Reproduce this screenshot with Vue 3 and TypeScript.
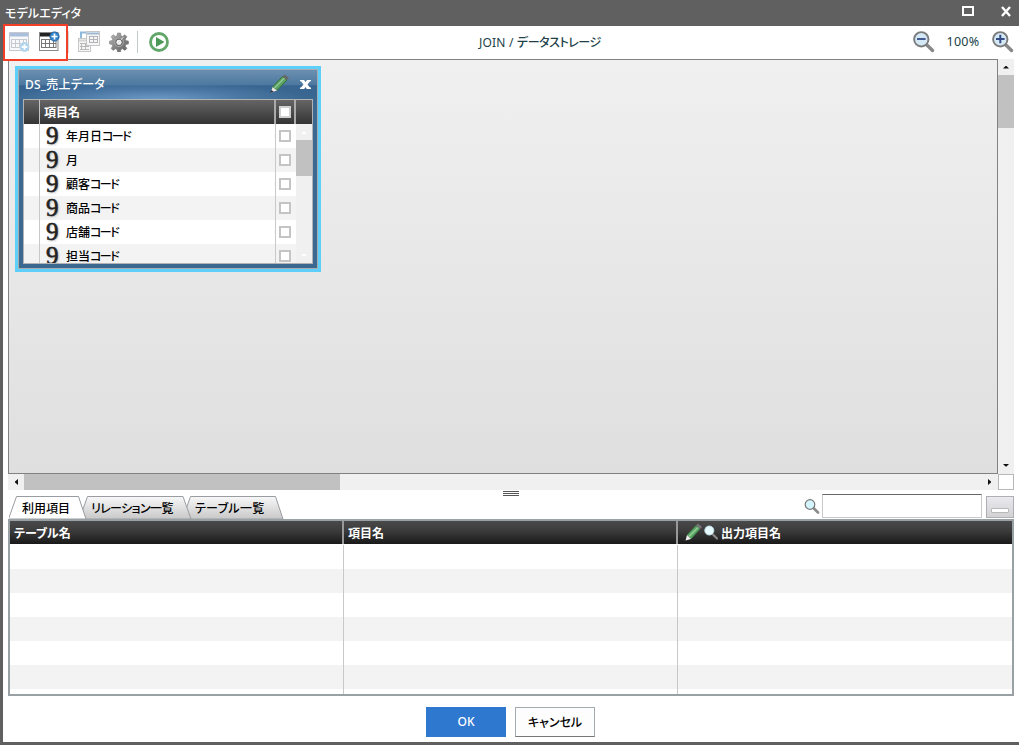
<script setup lang="ts">
import { ref } from 'vue'

interface Field {
  kanji: string
  kana: string
  checked: boolean
}

const fields = ref<Field[]>([
  { kanji: '年月日', kana: 'コード', checked: false },
  { kanji: '月', kana: '', checked: false },
  { kanji: '顧客', kana: 'コード', checked: false },
  { kanji: '商品', kana: 'コード', checked: false },
  { kanji: '店舗', kana: 'コード', checked: false },
  { kanji: '担当', kana: 'コード', checked: false },
])

const tabs = [
  { id: 'items', label: '利用項目', points: '-0.5,24 7.5,1.500 69.500,1.500 77,24' },
  { id: 'relations', label: 'リレーション一覧', points: '-0.5,24 7.5,1.500 103,1.500 111,24' },
  { id: 'tables', label: 'テーブル一覧', points: '-0.5,24 7.5,1.500 92.5,1.500 100,24' },
]
const activeTab = ref('items')
const keyword = ref('')
const emptyRows = 7
</script>

<template>
  <div class="window">
    <header class="titlebar">
      <span class="title">モデルエディタ</span>
      <svg class="win-icons" width="52" height="26" viewBox="0 0 52 26">
        <rect x="3" y="7" width="10" height="8" fill="none" stroke="#fff" stroke-width="2" />
        <path d="M42 7l8 9M50 7l-8 9" stroke="#fff" stroke-width="2.4" fill="none" />
      </svg>
    </header>

    <div class="toolbar">
      <div class="tools">
        <svg class="tool t1" width="22" height="22" viewBox="0 0 22 22">
          <rect x="1.500" y="1.500" width="19" height="18" fill="#f7f8f9" stroke="#c6c9cf" />
          <rect x="2" y="2" width="18" height="3.500" fill="#a9bfdb" />
          <path d="M3 8.500h15M3 12.500h15M3 16.500h15M3.500 8v9M7.500 8v9M11.500 8v9M15.500 8v9M18.500 8v9" stroke="#c6cad0" fill="none" />
          <circle cx="16.500" cy="16" r="4.500" fill="#acd2ed" stroke="#c1daeb" />
          <path d="M13.700 16h5.600M16.500 13.200v5.600" stroke="#fff" stroke-width="1.800" />
        </svg>
        <svg class="tool t2" width="22" height="22" viewBox="0 0 22 22">
          <rect x="1.500" y="1.500" width="18.500" height="18" fill="#fff" stroke="#888" />
          <rect x="2" y="2" width="17" height="3.500" fill="#222" />
          <path d="M3 8.500h15M3 12.500h15M3 16.500h15M3.500 8v9M7.500 8v9M11.500 8v9M15.500 8v9M18 8v9" stroke="#777" fill="none" />
          <circle cx="16.500" cy="5.500" r="4.600" fill="#3485c9" stroke="#2267a4" />
          <path d="M13.500 5.500h6M16.500 2.500v6" stroke="#fff" stroke-width="1.700" />
        </svg>
        <i class="divider first"></i>
        <svg class="tool t3" width="22" height="22" viewBox="0 0 22 22">
          <path d="M3 8V1.500h7" stroke="#8eb8dc" stroke-width="2" fill="none" />
          <rect x=".5" y="7.500" width="12" height="13" fill="#f5f5f5" stroke="#c8c8c8" />
          <path d="M1 9.500h11" stroke="#d5d5d5" stroke-width="2" />
          <path d="M2 12.500h9M2 15.500h9M2 18.500h9M3.500 12v7M7.500 12v7" stroke="#b8b8b8" />
          <rect x="8.500" y=".5" width="13" height="14" fill="#f6f6f6" stroke="#c6c6c6" />
          <path d="M9 2.500h12" stroke="#9fb8d4" stroke-width="2" />
          <path d="M11 5.500h9M11 8.500h9M11 11.500h9M11.500 5v7M15.500 5v7M19.500 5v7" stroke="#b2b4b8" />
        </svg>
        <svg class="tool t4" width="20" height="20" viewBox="0 0 20 20">
          <defs>
            <linearGradient id="gearFill" x1="0" y1="0" x2="1" y2="1">
              <stop offset="0" stop-color="#bbb" />
              <stop offset=".5" stop-color="#858585" />
              <stop offset="1" stop-color="#606060" />
            </linearGradient>
          </defs>
          <path d="M8.500 1h3l.5 2.800 1.500.6 2.400-1.700 2 2-1.600 2.500.6 1.400 2.600.5v2.800l-2.600.6-.6 1.400 1.600 2.500-2 2-2.500-1.600-1.400.6-.5 2.600h-3l-.5-2.600-1.400-.6-2.500 1.600-2-2 1.600-2.500-.6-1.400-2.600-.6V9.100l2.600-.5.600-1.400-1.600-2.500 2-2 2.500 1.700 1.400-.6z" fill="url(#gearFill)" stroke="#777" stroke-width=".5" />
          <circle cx="10" cy="10.300" r="4.300" fill="none" stroke="#aaa" stroke-width="1" />
          <circle cx="10" cy="10.300" r="3.200" fill="#f4f4f4" stroke="#5d5d5d" />
          <path d="M8.500 12l6-7" stroke="#ddd" />
        </svg>
        <i class="divider"></i>
        <svg class="tool t5" width="20" height="20" viewBox="0 0 20 20">
          <circle cx="10" cy="10" r="8.500" fill="#fff" stroke="#61a76a" stroke-width="2.800" />
          <path d="M7 5l8.500 5L7 15z" fill="#4c9857" />
        </svg>
      </div>
      <div class="path">JOIN / <span>データストレージ</span></div>
      <div class="zoom">
        <svg width="22" height="22" viewBox="0 0 22 22">
          <path d="M14 14l5.500 5.500" stroke="#888" stroke-width="3.400" stroke-linecap="round" />
          <circle cx="8.300" cy="8.300" r="7.200" fill="#d4e9f5" stroke="#7b7b7b" stroke-width="1.900" />
          <path d="M4 8h8.600" stroke="#344a87" stroke-width="1.800" />
        </svg>
        <span class="percent">100%</span>
        <svg width="22" height="22" viewBox="0 0 22 22">
          <path d="M14 14l5.500 5.500" stroke="#888" stroke-width="3.400" stroke-linecap="round" />
          <circle cx="8.300" cy="8.300" r="7.200" fill="#d4e9f5" stroke="#7b7b7b" stroke-width="1.900" />
          <path d="M4 8h8.600M8.300 3.700v8.600" stroke="#344a87" stroke-width="2" />
        </svg>
      </div>
      <div class="highlight"></div>
    </div>

    <div class="workspace">
      <div class="canvas">
        <section class="card">
          <div class="card-body">
            <div class="card-title">
              <span>DS_売上データ</span>
              <svg width="44" height="22" viewBox="0 0 44 22">
                <path d="M3.500 13L13.500 2.500l4.500 3.500L8 16.500z" fill="#5aa363" stroke="#37703f" />
                <path d="M5.500 14L15.500 4" stroke="#93c996" stroke-width="1.300" />
                <path d="M13.500 2.500l2-2 4.500 3.500-2 2z" fill="#686868" />
                <path d="M3.500 13l4.500 3.500-6 2z" fill="#eee8e2" />
                <path d="M2.600 16.200l2 1.400-3.600 1.200z" fill="#222" />
                <path d="M31 6h4l1.500 2L38 6h4v1.300h-1L38.500 10.400l2.500 3.200h1v1.300h-4.200l-1.300-2-1.300 2H31v-1.300h1l2.500-3.200L32 7.300h-1z" fill="#fff" />
              </svg>
            </div>
            <div class="fields">
              <div class="field-head">
                <i class="c-index"></i>
                <span class="c-name">項目名</span>
                <span class="c-check"><i class="box"></i></span>
                <i class="c-end"></i>
              </div>
              <div class="field-view">
                <div class="field-list">
                  <div v-for="field in fields" :key="field.kanji" class="field">
                    <i class="c-index"></i>
                    <span class="c-name"><b class="nine">9</b><span class="label">{{ field.kanji }}<span class="kana">{{ field.kana }}</span></span></span>
                    <span class="c-check" @click="field.checked = !field.checked"><i class="box"></i></span>
                  </div>
                </div>
                <div class="mini-scroll">
                  <svg width="16" height="16"><path d="M5 10l3-3 3 3z" fill="#fff" /></svg>
                  <i class="mini-thumb"></i>
                  <i class="fill"></i>
                  <svg width="16" height="16"><path d="M5 7h6l-3 3z" fill="#fff" /></svg>
                </div>
              </div>
            </div>
          </div>
        </section>
      </div>
      <div class="vscroll">
        <svg width="16" height="16"><path d="M5 9.500L7.500 7h1L11 9.500z" fill="#111" /></svg>
        <i class="vthumb"></i>
        <i class="fill"></i>
        <svg width="16" height="16"><path d="M5 6h6L8.500 8.500h-1z" fill="#111" /></svg>
      </div>
      <div class="hscroll">
        <svg width="16" height="16"><path d="M10 5v6L7 8.500v-1z" fill="#111" /></svg>
        <i class="hthumb"></i>
        <i class="fill"></i>
        <svg width="16" height="16"><path d="M6 5v6l3-2.500v-1z" fill="#111" /></svg>
      </div>
      <div class="corner"></div>
    </div>

    <div class="panel-bar">
      <nav class="tabs">
        <button v-for="tab in tabs" :key="tab.id" class="tab" :class="[tab.id, { active: tab.id === activeTab }]" @click="activeTab = tab.id">
          <svg class="tab-shape" width="114" height="24" viewBox="0 0 114 24">
            <defs>
              <linearGradient id="tabFill" x1="0" y1="0" x2="0" y2="1">
                <stop offset="0" stop-color="#f8f8f8" />
                <stop offset="1" stop-color="#c8c8c8" />
              </linearGradient>
            </defs>
            <polygon :points="tab.points" :fill="tab.id === activeTab ? '#fff' : 'url(#tabFill)'" stroke="#999da1" />
          </svg>
          <span>{{ tab.label }}</span>
        </button>
      </nav>
      <div class="grip"><i></i><i></i><i></i></div>
      <div class="search">
        <svg width="17" height="17" viewBox="0 0 17 17">
          <path d="M10 10.500l4 4" stroke="#8b8b8b" stroke-width="2.600" stroke-linecap="round" />
          <circle cx="6" cy="6.500" r="4.800" fill="#d5f5fc" stroke="#777" stroke-width="1.200" />
        </svg>
        <input v-model="keyword" type="text" />
        <button class="collapse"><i></i></button>
      </div>
    </div>

    <div class="grid">
      <div class="grid-head">
        <span>テーブル名</span>
        <span>項目名</span>
        <span>
          <svg width="37" height="20" viewBox="0 0 37 20">
            <path d="M3 12L12 2.500l4 3.500L7 16z" fill="#5ba564" stroke="#39763f" stroke-width=".7" />
            <path d="M5 13.500L14 4.500" stroke="#9acf9e" stroke-width="1.200" />
            <path d="M12 2.500l2-2 4 3.500-2 2z" fill="#777" />
            <path d="M3 12l4 4-5.500 1.500z" fill="#eee" />
            <path d="M28.500 11l4.500 4.500" stroke="#888" stroke-width="2.200" stroke-linecap="round" />
            <circle cx="25.300" cy="7.500" r="4.500" fill="#e5faff" stroke="#c2dfe8" />
          </svg>
          <em>出力項目名</em>
        </span>
      </div>
      <div class="grid-body">
        <div v-for="n in emptyRows" :key="n" class="grid-row"><i></i><i></i><i></i></div>
      </div>
    </div>

    <footer class="actions">
      <button class="ok">OK</button>
      <button class="cancel">キャンセル</button>
    </footer>
  </div>
</template>

<style>
body { margin: 0; overflow: hidden; }
</style>

<style scoped>
* { box-sizing: border-box; }
i, em { font-style: normal; }
svg { display: block; flex: none; }
button { padding: 0; border: 0; background: none; font: inherit; color: inherit; }
.window {
  width: 1019px; height: 745px; display: flex; flex-direction: column;
  background: #fff; border-left: 3px solid #606060; border-bottom: 3px solid #606060;
  font-family: "Noto Sans", "Noto Sans CJK JP", sans-serif; font-size: 12px; line-height: 16px;
  font-feature-settings: "palt"; font-weight: 500; color: #000; white-space: nowrap;
}
.fill { flex: 1; }
.titlebar {
  height: 26px; flex: none; margin-left: -3px; padding: 0 6px 0 5px; background: #606060; color: #fff;
  display: flex; align-items: center; justify-content: space-between;
}
.title { letter-spacing: .1px; padding-top: 1px; }
.win-icons { margin-right: 1px; }
.toolbar { height: 33px; flex: none; display: flex; align-items: center; position: relative; }
.tools { width: 476px; display: flex; align-items: center; padding: 0 0 1px 5px; }
.t1 { margin-right: 8px; }
.t3 { margin: 0 9px; }
.divider { width: 1px; height: 22px; background: #c3cbc8; margin: 0 11px 0 8px; }
.divider.first { margin: 0 0 0 8px; background: #d5d9d8; }
.path { flex: 1; color: #203f48; font-weight: 400; letter-spacing: .2px; }
.path span { letter-spacing: -.45px; font-weight: 500; }
.zoom { display: flex; align-items: center; width: 106px; color: #203f48; padding-bottom: 1px; }
.percent { width: 57px; padding-right: 1px; text-align: center; font-size: 12.5px; font-weight: 400; letter-spacing: .3px; }
.highlight { position: absolute; left: 0; top: -2px; width: 65px; height: 37px; border: 2px solid #f33f28; z-index: 2; }
.workspace {
  height: 431px; flex: none; margin-left: 5px; width: 1006px;
  display: grid; grid-template-columns: 990px 16px; grid-template-rows: 415px 16px;
}
.canvas { border: 1px solid #818181; background: linear-gradient(#f0f0f0, #dfdfdf); position: relative; }
.vscroll { display: flex; flex-direction: column; background: #f0f0f0; }
.vthumb { height: 53px; background: #c1c1c1; }
.hscroll { display: flex; background: #f0f0f0; }
.hthumb { width: 316px; background: #c1c1c1; }
.corner { border: 1px solid #b8b8b8; background: #fff; }
.card { position: absolute; left: 6px; top: 6px; width: 306px; height: 206px; border: 3px solid #5ecffb; }
.card-body {
  height: 200px; border: 1px solid #a9adaf; padding: 0 4px 4px; background: #3b6891;
  display: flex; flex-direction: column;
}
.card-title {
  height: 29px; flex: none; margin: 0 -4px; padding: 0 4px 0 6px; color: #fff; display: flex; align-items: center; justify-content: space-between;
  background: radial-gradient(ellipse 150px 17px at 46% 100%, #6c98c6 0%, rgba(90, 136, 181, .55) 55%, rgba(59, 104, 145, 0) 100%), linear-gradient(#6b8fb0 0, #4d789f 52%, #376491 54%, #3b6891 100%);
}
.card-title span { letter-spacing: .25px; padding-top: 1px; }
.fields { flex: 1; border: 1px solid #b1b3b4; display: flex; flex-direction: column; background: #fff; min-height: 0; }
.field-head { height: 24px; flex: none; display: flex; background: linear-gradient(#656565, #343434); color: #fff; }
.c-index { width: 16px; flex: none; border-right: 1px solid #c8c8c8; }
.c-name { width: 236px; flex: none; border-right: 1px solid #c8c8c8; display: flex; align-items: center; }
.c-check { width: 20px; flex: none; display: flex; align-items: center; justify-content: flex-start; padding-left: 3px; }
.field-head .c-name { padding: 2px 0 0 4px; border-right: 2px solid #aaa; font-weight: 700; }
.field-head .c-check { border-right: 2px solid #aaa; }
.field-head .c-index { border-color: #c4c4c4; }
.box { width: 12px; height: 12px; border: 2px solid #c4c4c4; background: #fff; }
.field-head .box { border-color: #d0d0d0; }
.field-view { flex: 1; min-height: 0; display: flex; overflow: hidden; }
.field-list { width: 272px; flex: none; }
.field { height: 24px; display: flex; }
.field:nth-child(even) { background: #f3f3f3; }
.label { padding-top: 2px; }
.kana { letter-spacing: -1.6px; }
.nine {
  width: 20px; margin: 0 0 0 6px; font: 400 25px/24px "Liberation Serif", serif; color: #222;
  -webkit-text-stroke: .6px #222; text-shadow: 1px 1px 2px #aaa;
}
.mini-scroll { width: 16px; display: flex; flex-direction: column; background: #f0f0f0; }
.mini-thumb { height: 36px; background: #c1c1c1; }
.panel-bar { height: 29px; flex: none; display: flex; align-items: flex-end; width: 1011px; padding-left: 6px; }
.tabs { width: 494px; height: 24px; display: flex; }
.tab { position: relative; height: 24px; text-align: left; }
.tab-shape { position: absolute; left: 0; top: 0; }
.tab span { position: relative; display: block; padding-top: 3px; }
.tab.items { width: 71px; z-index: 3; }
.tab.items span { padding-left: 13px; }
.tab.relations { width: 103px; z-index: 2; }
.tab.relations span { padding-left: 11px; letter-spacing: -.6px; }
.tab.tables { width: 100px; z-index: 1; }
.tab.tables span { padding-left: 12px; letter-spacing: .3px; }
.grip { align-self: flex-start; width: 16px; height: 6px; margin-top: 1px; display: flex; flex-direction: column; gap: 1px; }
.grip i { height: 1px; background: #555; }
.search { flex: 1; display: flex; align-items: flex-end; justify-content: flex-end; padding-bottom: 1px; }
.search svg { margin: 0 1px 3px 0; }
.search input {
  width: 160px; height: 24px; margin-right: 4px; border: 1px solid #c8c8c8; border-top-color: #666;
  background: #fff; outline: 0; padding: 0 4px; font: inherit;
}
.collapse { width: 28px; height: 22px; border: 1px solid #aeaeb4; background: linear-gradient(#e9e9ee, #d2d2d5); display: flex; align-items: flex-end; justify-content: center; padding-bottom: 4px; }
.collapse i { width: 18px; height: 5px; border: 1px solid #b8b8b8; background: #fff; border-radius: 1px; }
.grid {
  width: 1006px; height: 177px; flex: none; margin-left: 5px; border: 2px solid #9aa1a5;
  display: flex; flex-direction: column; overflow: hidden;
}
.grid-head {
  height: 23px; flex: none; display: grid; grid-template-columns: 334px 334px 334px;
  background: linear-gradient(#4a4a4a, #3a3a3a 45%, #191919); color: #fff; font-weight: 700;
}
.grid-head span { display: flex; align-items: center; padding: 3px 0 0 4px; border-right: 2px solid #999; }
.grid-head span:last-child { padding-left: 6px; border: 0; }
.grid-head svg { margin: -3px 0 0; }
.grid-body { flex: 1; overflow: hidden; padding-top: 1px; }
.grid-row { height: 24px; display: grid; grid-template-columns: 334px 334px 334px; }
.grid-row:nth-child(even) { background: #f3f3f3; }
.grid-row i { border-right: 1px solid #c8c8c8; }
.grid-row i:last-child { border: 0; }
.actions { flex: 1; display: flex; gap: 9px; padding: 11px 0 0 423px; }
.actions button { width: 80px; height: 30px; }
.ok { background: #2f78d0; color: #fff; }
.actions .cancel { border: 1px solid #a4abae; border-bottom-color: #777; background: #fdfdfd; padding-top: 2px; }
</style>
